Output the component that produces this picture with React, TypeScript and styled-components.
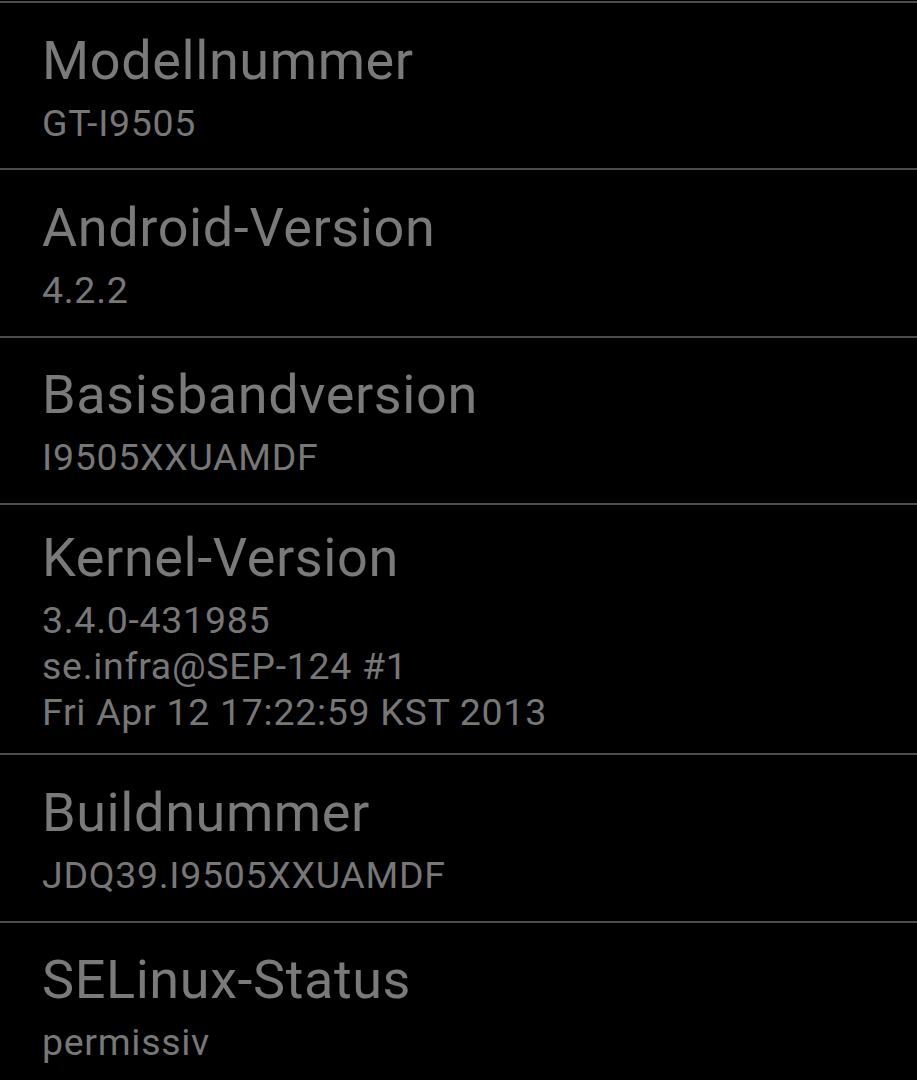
import React from "react";
import styled, { createGlobalStyle } from "styled-components";

const GlobalStyle = createGlobalStyle`
  html, body {
    margin: 0;
    padding: 0;
    background: #000000;
  }
  body {
    font-family: Roboto, "Noto Sans", "DejaVu Sans", sans-serif;
    -webkit-font-smoothing: antialiased;
  }
`;

const Screen = styled.main`
  width: 917px;
  height: 1080px;
  overflow: hidden;
  background: #000000;
  padding-top: 1px;
  box-sizing: border-box;
`;

const List = styled.ul`
  list-style: none;
  margin: 0;
  padding: 0;
  display: flex;
  flex-direction: column;
`;

const Item = styled.li`
  box-sizing: border-box;
  min-height: 167.4px;
  border-top: 2px solid #4c4c4c;
  padding: 21px 24px 18px 42px;
  display: flex;
  flex-direction: column;
  justify-content: center;
`;

const Title = styled.div`
  font-size: 54px;
  line-height: 64px;
  letter-spacing: 0.6px;
  color: #7a7a7a;
  white-space: nowrap;
`;

const Summary = styled.div`
  margin-top: 7px;
  font-size: 37.5px;
  line-height: 46px;
  letter-spacing: 0.7px;
  color: #777777;
  white-space: nowrap;
`;

const Line = styled.div``;

type Entry = { title: string; lines: string[] };

const entries: Entry[] = [
  { title: "Modellnummer", lines: ["GT-I9505"] },
  { title: "Android-Version", lines: ["4.2.2"] },
  { title: "Basisbandversion", lines: ["I9505XXUAMDF"] },
  {
    title: "Kernel-Version",
    lines: ["3.4.0-431985", "se.infra@SEP-124 #1", "Fri Apr 12 17:22:59 KST 2013"],
  },
  { title: "Buildnummer", lines: ["JDQ39.I9505XXUAMDF"] },
  { title: "SELinux-Status", lines: ["permissiv"] },
];

export default function App() {
  return (
    <>
      <GlobalStyle />
      <Screen>
        <List>
          {entries.map((e) => (
            <Item key={e.title}>
              <Title>{e.title}</Title>
              <Summary>
                {e.lines.map((l) => (
                  <Line key={l}>{l}</Line>
                ))}
              </Summary>
            </Item>
          ))}
        </List>
      </Screen>
    </>
  );
}
